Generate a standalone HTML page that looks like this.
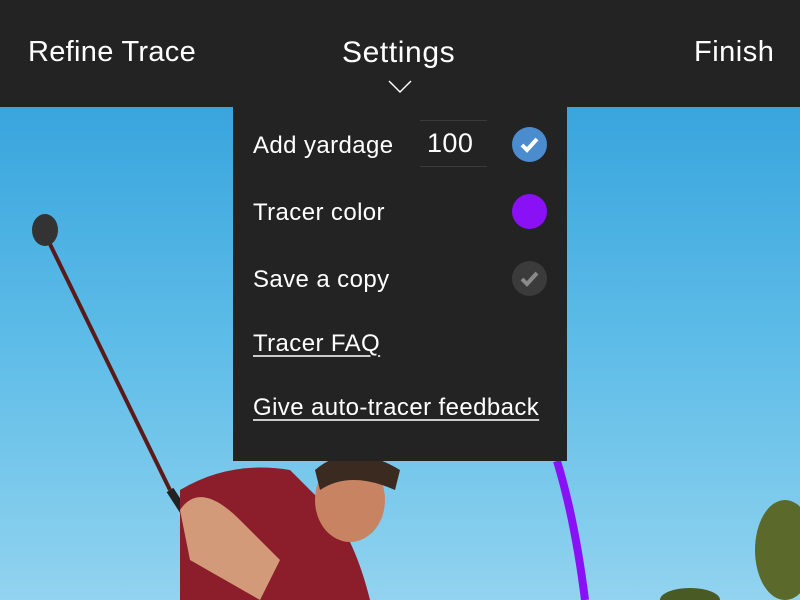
<!DOCTYPE html>
<html><head><style>
body{margin:0;width:800px;height:600px;overflow:hidden;font-family:"Liberation Sans",sans-serif;position:relative;background:linear-gradient(#2c9bd8 0px,#3fa9df 150px,#5fbde8 350px,#92d3ef 600px)}
.hdr{position:absolute;left:0;top:0;width:800px;height:107px;background:#232323;color:#fff;font-size:29px}
.hdr span{position:absolute;top:36px}
.menu{position:absolute;left:233px;top:107px;width:334px;height:354px;background:#232323;color:#fff;font-size:24px;letter-spacing:0.4px}
.menu .t{position:absolute;left:20px}
.u{text-decoration:underline;text-underline-offset:4px;text-decoration-color:#ccc}
.circ{position:absolute;left:279px;width:35px;height:35px;border-radius:50%}
</style></head><body>
<svg width="800" height="600" style="position:absolute;left:0;top:0">
<path d="M46 236 L170 490" stroke="#5a1a1a" stroke-width="4"/>
<path d="M170 490 L225 575" stroke="#222" stroke-width="8"/>
<ellipse cx="45" cy="230" rx="13" ry="16" fill="#333"/>
<path d="M180 490 Q230 460 290 470 L330 510 Q355 540 370 600 L180 600 Z" fill="#8c1d2a"/>
<ellipse cx="350" cy="500" rx="35" ry="42" fill="#c88462"/>
<path d="M315 470 Q350 440 400 470 L395 490 Q350 470 320 490Z" fill="#3a2a20"/>
<path d="M180 510 Q200 480 240 520 L280 560 L260 600 L190 560Z" fill="#d39a7a"/>
<path d="M557 461 Q575 520 585 600" stroke="#8a10f5" stroke-width="8" fill="none"/>
<ellipse cx="785" cy="550" rx="30" ry="50" fill="#5b6a2a"/>
<ellipse cx="690" cy="600" rx="30" ry="12" fill="#4a5a25"/>
</svg>
<div class="hdr"><span style="left:28px;letter-spacing:0.3px">Refine Trace</span><span style="left:342px;font-size:30px;letter-spacing:0.6px">Settings</span><span style="left:694px;letter-spacing:0.5px">Finish</span>
<svg style="position:absolute;left:388px;top:80px" width="24" height="14"><path d="M1 1 L12 12 L23 1" stroke="#fff" stroke-width="1.5" fill="none"/></svg></div>
<div class="menu">
<div class="t" style="top:25px">Add yardage</div>
<div style="position:absolute;left:187px;top:13px;width:67px;height:45px;border-top:1px solid #3a3a3a;border-bottom:1px solid #3a3a3a"></div>
<div style="position:absolute;left:194px;top:21px;font-size:27px">100</div>
<div class="circ" style="top:20px;background:#4a8ccd"><svg width="35" height="35"><path d="M10 18 L15 23 L25 12" stroke="#fff" stroke-width="4" fill="none"/></svg></div>
<div class="t" style="top:92px">Tracer color</div>
<div class="circ" style="top:87px;background:#8a10f5"></div>
<div class="t" style="top:159px">Save a copy</div>
<div class="circ" style="top:154px;background:#3b3b3b"><svg width="35" height="35"><path d="M10 18 L15 23 L25 12" stroke="#8a8a8a" stroke-width="4" fill="none"/></svg></div>
<div class="t u" style="top:223px">Tracer FAQ</div>
<div class="t u" style="top:287px">Give auto-tracer feedback</div>
</div>
</body></html>
